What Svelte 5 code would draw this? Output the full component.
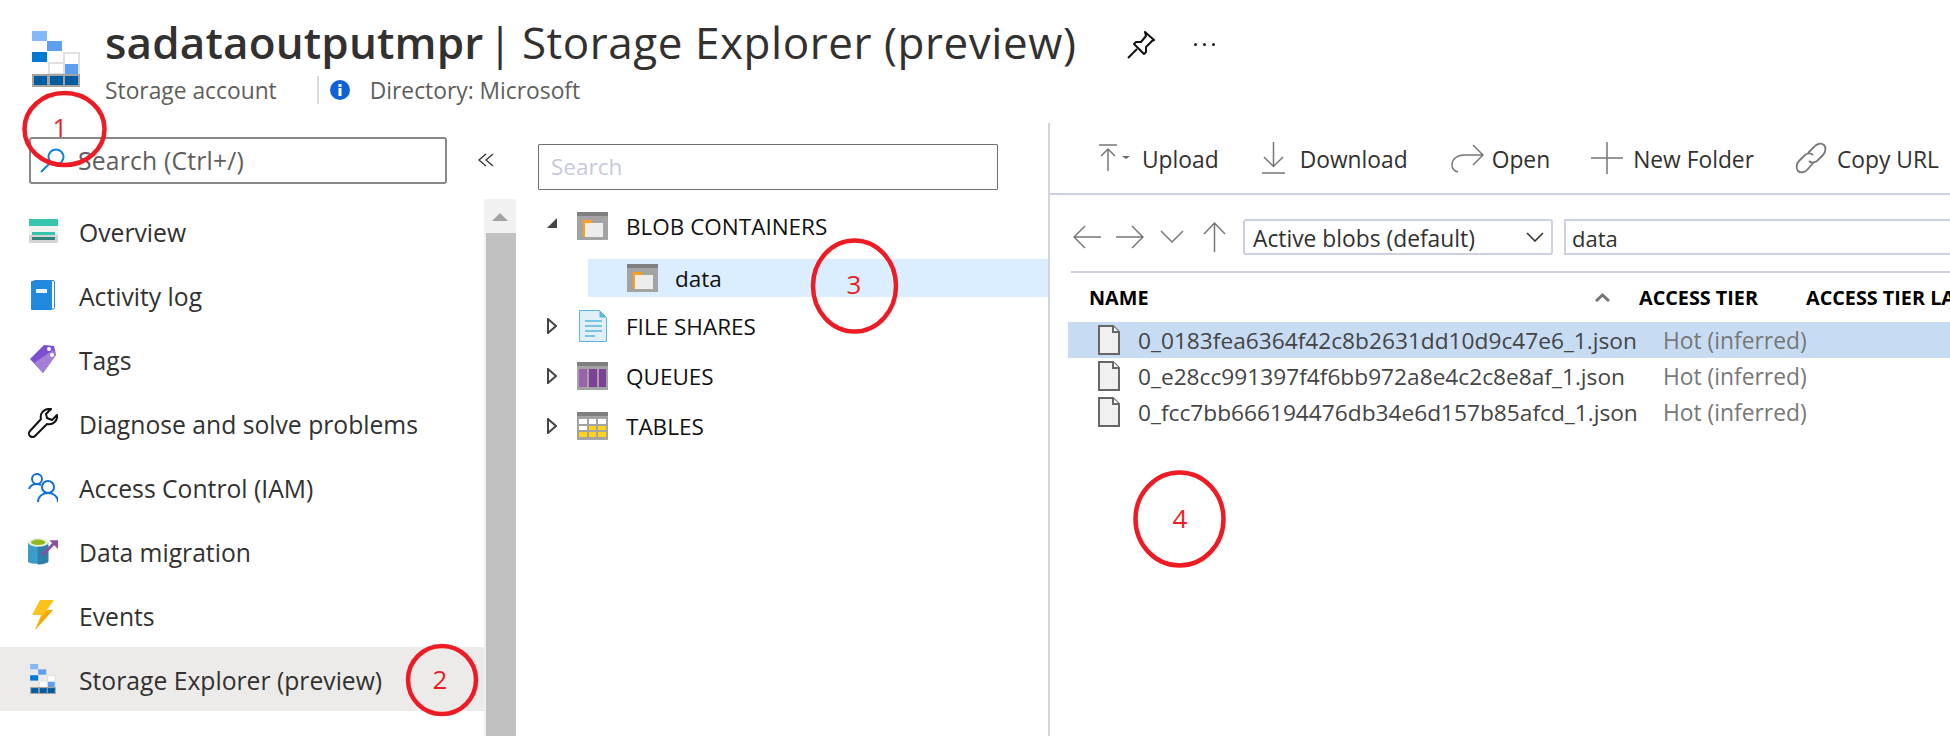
<script>
  const nav = ['Overview','Activity log','Tags','Diagnose and solve problems','Access Control (IAM)','Data migration','Events','Storage Explorer (preview)'];
  const files = ['0_0183fea6364f42c8b2631dd10d9c47e6_1.json','0_e28cc991397f4f6bb972a8e4c2c8e8af_1.json','0_fcc7bb666194476db34e6d157b85afcd_1.json'];
</script>

{#snippet storage(w, h)}
  <svg width={w} height={h} viewBox="0 0 48 56">
    <rect x="0" y="0" width="15" height="10" fill="#83b9f9"/>
    <rect x="15" y="10" width="15" height="10" fill="#5ea0ef"/>
    <rect x="0" y="21" width="15" height="10" fill="#0078d4"/>
    <rect x="32" y="22" width="15" height="21" fill="#fff" stroke="#e1e1e1" stroke-width="2"/>
    <rect x="17" y="32" width="15" height="11" fill="#fff" stroke="#e1e1e1" stroke-width="2"/>
    <rect x="33" y="33" width="13" height="10" fill="#5ea0ef"/>
    <rect x="0" y="43" width="48" height="13" fill="#a3a3a3"/>
    <rect x="2" y="45" width="13" height="9" fill="#005ba1"/>
    <rect x="18" y="45" width="13" height="9" fill="#005ba1"/>
    <rect x="33" y="45" width="13" height="9" fill="#005ba1"/>
  </svg>
{/snippet}

{#snippet navIcon(i)}
  {#if i === 0}
    <svg width="29" height="24" viewBox="0 0 29 24">
      <rect width="29" height="24" rx="1" fill="#d4d4d4"/><rect y="7" width="29" height="9" fill="#f2f2f2"/>
      <rect width="29" height="7" fill="#38c5b0"/><rect x="3" y="13" width="23" height="3" fill="#38c5b0"/><rect x="3" y="18" width="23" height="3" fill="#2f8379"/>
    </svg>
  {:else if i === 1}
    <svg width="24" height="30" viewBox="0 0 24 30">
      <rect x="2" y="0.5" width="21.5" height="28.5" rx="1.5" fill="#fff" stroke="#2a86d8"/>
      <rect y="1" width="21" height="29" rx="1" fill="#2089e0"/><rect x="5" y="9" width="11" height="4" fill="#eaf3fb"/>
    </svg>
  {:else if i === 2}
    <svg width="27" height="29" viewBox="0 0 27 29">
      <path d="M0 14 14 0l10 1 2 9-13 18z" fill="#7a4fd1"/><path d="M4 18 23 5l3 5-13 18z" fill="#a47fd6"/>
      <circle cx="19" cy="4" r="2" fill="#fff"/><circle cx="22" cy="10" r="2" fill="#fff"/>
    </svg>
  {:else if i === 3}
    <svg width="30" height="30" viewBox="0 0 30 30" fill="none" stroke="#111" stroke-width="2">
      <path d="M21 1a8 8 0 0 0-8 10L2 23a3.5 3.5 0 0 0 5 5L19 16a8 8 0 0 0 10-9l-5 5-5-2-1-4 5-5z" stroke-linejoin="round"/>
    </svg>
  {:else if i === 4}
    <svg width="30" height="30" viewBox="0 0 30 30" fill="none" stroke="#0f6fd8" stroke-width="2">
      <circle cx="9" cy="7" r="5"/><path d="M1 17c1-3 4-5 8-5 2 0 3 .5 4 1"/><circle cx="20" cy="15" r="6"/><path d="M10 30c0-5 4-9 10-9s10 4 10 9"/>
    </svg>
  {:else if i === 5}
    <svg width="31" height="29" viewBox="0 0 31 29">
      <path d="M0 5h21v20c-2 3-19 3-21 0z" fill="#3a9cc9"/><path d="M10 8h11v17c-3 2-8 3-11 3z" fill="#2f7fa8"/>
      <ellipse cx="10.500" cy="5" rx="10.500" ry="4.500" fill="#e8f0d8"/><ellipse cx="10.500" cy="5" rx="7.500" ry="2.800" fill="#8fba1e"/>
      <path d="M15 18 27 6" stroke="#8a4f9e" stroke-width="3"/><path d="M22 3h9v9z" fill="#8a4f9e"/>
    </svg>
  {:else if i === 6}
    <svg width="22" height="30" viewBox="0 0 22 30">
      <path d="M8 0h14l-7 10h6L3 30l6-15H0z" fill="#fcc21b"/><path d="M15 10h6L3 30l6-12z" fill="#f5a800"/>
    </svg>
  {:else}
    {@render storage(26, 30)}
  {/if}
{/snippet}

{#snippet treeIcon(kind)}
  <span class="ticon">
  {#if kind === 'file'}
    <svg width="28" height="32" viewBox="0 0 28 32">
      <path d="M.5.5h20l7 7v24H.5z" fill="#dff0f8" stroke="#58b5de"/><path d="M20.500.5v7h7z" fill="#58b5de"/>
      <path d="M6 11h17M6 16h17M6 21h17M6 26h10" stroke="#58b5de" stroke-width="1.500"/>
    </svg>
  {:else}
    <svg width="31" height="28" viewBox="0 0 31 28">
      <rect width="31" height="28" fill="#a3a3a3"/><rect width="31" height="4" fill="#7f7f7f"/>
      {#if kind === 'blob'}
        <path d="M6 8h8l2 3h10v14H6z" fill="#ff9f1c"/><rect x="8" y="11" width="18" height="14" fill="#ededed"/>
      {:else if kind === 'queue'}
        <rect x="2" y="7" width="8" height="18" fill="#9b63ad"/><rect x="12" y="7" width="8" height="18" fill="#7e3f96"/><rect x="22" y="7" width="7" height="18" fill="#7e3f96"/>
      {:else}
        <rect x="2" y="7" width="8" height="5" fill="#fff"/><rect x="12" y="7" width="7" height="5" fill="#fff"/><rect x="21" y="7" width="8" height="5" fill="#fff"/>
        <rect x="2" y="14" width="8" height="4" fill="#fff"/><rect x="12" y="14" width="7" height="4" fill="#ffd21e"/><rect x="21" y="14" width="8" height="4" fill="#ffd21e"/>
        <rect x="2" y="20" width="8" height="5" fill="#ffd21e"/><rect x="12" y="20" width="7" height="5" fill="#ffd21e"/><rect x="21" y="20" width="8" height="5" fill="#ffd21e"/>
      {/if}
    </svg>
  {/if}
  </span>
{/snippet}

{#snippet caret()}
  <svg class="caret" width="10" height="16" viewBox="0 0 10 16"><path d="M1 1l8 7-8 7z" fill="#fff" stroke="#444" stroke-width="2"/></svg>
{/snippet}

<div class="app">
  <header class="top">
    <div class="logo">{@render storage(48, 56)}</div>
    <div class="heading">
      <div class="title-row">
        <h1><b>sadataoutputmpr</b> <span class="bar">|</span> <span class="light">Storage Explorer (preview)</span></h1>
        <svg class="pin" width="28" height="28" viewBox="0 0 28 28" fill="none" stroke="#111" stroke-width="2" stroke-linejoin="round">
          <path d="M18 1l9 8-2 1-6 6 0 5-2 2-10-10 2-2h5l5-6z"/><path d="M10 18 1 27"/>
        </svg>
        <span class="dots"><i></i><i></i><i></i></span>
      </div>
      <div class="sub">
        <span>Storage account</span>
        <span class="sub-sep"></span>
        <svg width="20" height="20" viewBox="0 0 20 20"><circle cx="10" cy="10" r="10" fill="#0f62d6"/><rect x="8.500" y="8" width="3" height="8" fill="#fff"/><rect x="8.500" y="4" width="3" height="3" fill="#fff"/></svg>
        <span class="sub-dir">Directory: Microsoft</span>
      </div>
    </div>
  </header>

  <main class="body">
    <aside class="side">
      <div class="side-search-row">
        <div class="side-search">
          <svg width="25" height="25" viewBox="0 0 25 25" fill="none" stroke="#1083d8" stroke-width="2"><circle cx="16" cy="9" r="7.500"/><path d="M10.500 14.500 1 24"/></svg>
          <span>Search (Ctrl+/)</span>
        </div>
        <svg class="collapse" width="16" height="14" viewBox="0 0 16 14" fill="none" stroke="#333" stroke-width="1.300"><path d="M8 1 1 7l7 6M15 1 8 7l7 6"/></svg>
      </div>
      <div class="side-lower">
        <nav class="nav">
          {#each nav as item, i}
            <div class="nav-item" class:active={i === 7}>
              <span class="nav-icon">{@render navIcon(i)}</span>
              <span class="nav-label">{item}</span>
            </div>
          {/each}
        </nav>
        <div class="scroll">
          <div class="scroll-up"><svg width="16" height="8" viewBox="0 0 16 8"><path d="M8 0l8 8H0z" fill="#a3a3a3"/></svg></div>
          <div class="scroll-thumb"></div>
        </div>
      </div>
    </aside>

    <section class="tree">
      <div class="tree-search">Search</div>
      <div class="tree-row">
        <svg class="caret" width="10" height="10" viewBox="0 0 10 10"><path d="M10 0v10H0z" fill="#444"/></svg>
        {@render treeIcon('blob')}<span>BLOB CONTAINERS</span>
      </div>
      <div class="tree-row child">{@render treeIcon('blob')}<span>data</span></div>
      <div class="tree-row">{@render caret()}{@render treeIcon('file')}<span>FILE SHARES</span></div>
      <div class="tree-row">{@render caret()}{@render treeIcon('queue')}<span>QUEUES</span></div>
      <div class="tree-row">{@render caret()}{@render treeIcon('table')}<span>TABLES</span></div>
    </section>

    <section class="pane">
      <div class="toolbar">
        <div class="tool t-up">
          <svg width="34" height="28" viewBox="0 0 34 28" fill="none" stroke="#777" stroke-width="1.500"><path d="M1 1h18M10 27V5M3 12l7-7 7 7"/><path d="M24 12h8l-4 3z" fill="#666" stroke="none"/></svg>
          <span>Upload</span>
        </div>
        <div class="tool t-down">
          <svg width="23" height="32" viewBox="0 0 23 32" fill="none" stroke="#777" stroke-width="1.500"><path d="M11.500 0v24M2 15l9.500 9.500L21 15M0 31h23"/></svg>
          <span>Download</span>
        </div>
        <div class="tool t-open">
          <svg width="33" height="30" viewBox="0 0 33 30" fill="none" stroke="#777" stroke-width="1.500"><path d="M32 12H13C6 12 1 16 1 22c0 3 2 6 6 7M22 2l10 10-10 10"/></svg>
          <span>Open</span>
        </div>
        <div class="tool">
          <svg width="32" height="32" viewBox="0 0 32 32" fill="none" stroke="#777" stroke-width="1.500"><path d="M16 0v32M0 16h32"/></svg>
          <span>New Folder</span>
        </div>
        <div class="tool">
          <svg width="32" height="32" viewBox="0 0 32 32" fill="none" stroke="#777" stroke-width="1.800"><path d="M13 11 19 5c3-4 8-4 10-2s2 7-1 10l-6 6c-3 2-6 2-8 0"/><path d="M19 20l-6 7c-3 4-8 4-10 2s-2-7 1-10l6-6c3-2 6-2 8 0"/></svg>
          <span>Copy URL</span>
        </div>
      </div>

      <div class="crumbs">
        <svg width="28" height="24" viewBox="0 0 28 24" fill="none" stroke="#777" stroke-width="1.500"><path d="M28 12H1M12 1 1 12l11 11"/></svg>
        <svg class="fwd" width="28" height="24" viewBox="0 0 28 24" fill="none" stroke="#777" stroke-width="1.500"><path d="M0 12h27M16 1l11 11-11 11"/></svg>
        <svg class="dn" width="24" height="14" viewBox="0 0 24 14" fill="none" stroke="#777" stroke-width="1.500"><path d="M1 1l11 11L23 1"/></svg>
        <svg class="upa" width="23" height="30" viewBox="0 0 23 30" fill="none" stroke="#777" stroke-width="1.500"><path d="M11.500 30V1M1 12 11.500 1 22 12"/></svg>
        <div class="select">
          <span class="stext">Active blobs (default)</span>
          <svg width="18" height="10" viewBox="0 0 18 10" fill="none" stroke="#333" stroke-width="1.600"><path d="M1 1l8 8 8-8"/></svg>
        </div>
        <div class="path"><span class="ptext">data</span></div>
      </div>

      <div class="table">
        <div class="thead">
          <span class="th-name">NAME</span>
          <svg class="sort" width="15" height="9" viewBox="0 0 15 9" fill="none" stroke="#777" stroke-width="3"><path d="M1 8l6.500-6L14 8"/></svg>
          <span class="th-tier">ACCESS TIER</span>
          <span>ACCESS TIER LA</span>
        </div>
        {#each files as f, i}
          <div class="row" class:selected={i === 0}>
            <svg width="22" height="30" viewBox="0 0 22 30"><path d="M1 1h14l6 6v22H1z" fill="#f0f0f0" stroke="#666" stroke-width="2"/><path d="M15 1v6h6" fill="#fff" stroke="#666" stroke-width="2"/></svg>
            <span class="fname">{f}</span>
            <span class="tier">Hot (inferred)</span>
          </div>
        {/each}
      </div>
    </section>
  </main>

  <svg class="marks" width="1950" height="736" viewBox="0 0 1950 736" fill="none" stroke="#ed1c24" stroke-width="4.500">
    <ellipse cx="64.500" cy="129" rx="40" ry="36"/>
    <ellipse cx="442" cy="680" rx="34" ry="34"/>
    <ellipse cx="854.500" cy="286" rx="41.500" ry="45.500"/>
    <ellipse cx="1179.500" cy="519" rx="44" ry="46.500"/>
    <g fill="#ed1c24" stroke="none" font-size="26" font-family="'Open Sans', sans-serif" text-anchor="middle">
      <text x="60" y="137">1</text><text x="440" y="689">2</text><text x="854" y="294">3</text><text x="1180" y="528">4</text>
    </g>
  </svg>
</div>

<style>
  :global(body) { margin: 0; background: #fff; }
  .app { position: relative; width: 1950px; height: 736px; overflow: hidden; display: flex; flex-direction: column; font-family: "Open Sans", "Noto Sans", sans-serif; color: #323130; background: #fff; }
  .top { height: 123px; flex: none; display: flex; box-sizing: border-box; padding: 31px 0 0 32px; gap: 25px; }
  .logo { height: 56px; }
  .heading { margin-top: -19px; }
  .title-row { display: flex; align-items: center; height: 61px; }
  h1 { margin: 0; font-size: 44px; font-weight: 400; line-height: 61px; white-space: nowrap; letter-spacing: .15px; }
  h1 b { font-weight: 600; }
  .bar { margin: 0 -2px 0 -7px; }
  .light { letter-spacing: .55px; }
  .pin { margin: 4px 0 0 51px; }
  .dots { display: flex; gap: 6px; margin: 4px 0 0 39px; }
  .dots i { width: 3px; height: 3px; background: #222; border-radius: 50%; }
  .sub { display: flex; align-items: center; height: 30px; font-size: 22.8px; color: #605e5c; margin-top: 2px; }
  .sub-sep { width: 2px; height: 28px; background: #d8d8d8; margin: 0 11px 0 40px; }
  .sub-dir { margin-left: 20px; }
  .body { flex: 1; display: flex; min-height: 0; }
  .side { width: 516px; flex: none; display: flex; flex-direction: column; }
  .side-search-row { height: 76px; flex: none; display: flex; align-items: flex-start; padding: 14px 0 0 29px; box-sizing: border-box; }
  .side-search { width: 418px; height: 47px; box-sizing: border-box; border: 2px solid #8a8886; border-radius: 3px; display: flex; align-items: center; gap: 13px; padding-left: 9px; font-size: 24.7px; letter-spacing: .2px; color: #605e5c; }
  .collapse { margin: 16px 0 0 31px; }
  .side-lower { flex: 1; display: flex; min-height: 0; }
  .nav { width: 484px; flex: none; }
  .nav-item { height: 64px; display: flex; align-items: center; font-size: 24.7px; padding-left: 28px; }
  .nav-item.active { background: #edebe9; }
  .nav-icon { width: 30px; margin-right: 21px; flex: none; display: flex; align-items: center; justify-content: center; }
  .nav-label { margin-top: 2px; }
  .scroll { width: 32px; flex: none; background: #f1f1f1; display: flex; flex-direction: column; }
  .scroll-up { height: 34px; display: flex; justify-content: center; padding-top: 14px; box-sizing: border-box; }
  .scroll-thumb { flex: 1; margin-left: 2px; background: #c1c1c1; }
  .tree { width: 532px; flex: none; box-sizing: border-box; padding: 21px 0 0 0; font-size: 22.5px; color: #111; }
  .tree-search { width: 460px; height: 46px; margin: 0 0 11px 22px; box-sizing: border-box; border: 1px solid #6f6f6f; border-radius: 1px; padding-left: 12px; line-height: 44px; color: #c7c9db; font-size: 22.5px; }
  .tree-row { height: 50px; display: flex; align-items: center; padding-left: 61px; gap: 18px; position: relative; }
  .ticon { width: 31px; flex: none; display: flex; justify-content: center; }
  .tree-row .caret { position: absolute; left: 31px; top: 17px; }
  .tree-row.child { height: 38px; margin: 8px 0 0 72px; padding-left: 39px; gap: 17px; background: #dbeeff; }
  .tree-row.child + .tree-row { margin-top: 4px; }
  .pane { flex: 1; min-width: 0; border-left: 2px solid #d2d4de; }
  .toolbar { height: 72px; box-sizing: border-box; border-bottom: 2px solid #cdd0e0; display: flex; align-items: center; padding-left: 48px; font-size: 22.8px; }
  .tool { display: flex; align-items: center; gap: 10px; margin-right: 41px; white-space: nowrap; }
  .tool span { margin-top: 3px; }
  .t-up { margin-right: 43px; }
  .t-down { margin-right: 43px; gap: 15px; }
  .t-open { gap: 8px; }
  .crumbs { height: 78px; box-sizing: border-box; margin-left: 21px; border-bottom: 2px solid #cdd0e0; display: flex; align-items: center; padding: 8px 0 0 2px; }
  .fwd { margin-left: 15px; }
  .dn { margin-left: 16px; }
  .upa { margin-left: 19px; }
  .select { width: 310px; height: 36px; margin-left: 17px; flex: none; box-sizing: border-box; border: 2px solid #cdd0e0; border-radius: 3px; display: flex; align-items: center; justify-content: space-between; padding: 0 7px 0 8px; font-size: 22.8px; }
  .stext { margin-top: 3px; }
  .ptext { margin-top: 1px; }
  .path { flex: 1; height: 36px; margin-left: 11px; box-sizing: border-box; border: 2px solid #cdd0e0; border-right: 0; padding-left: 6px; display: flex; align-items: center; font-size: 22px; }
  .table { margin-left: 18px; white-space: nowrap; overflow: hidden; }
  .thead { height: 49px; display: flex; align-items: center; font-size: 19.8px; font-weight: 700; color: #000; padding-left: 21px; box-sizing: border-box; }
  .th-name { width: 506px; flex: none; }
  .sort { flex: none; margin-right: 29px; }
  .th-tier { width: 167px; flex: none; }
  .row { height: 36px; display: flex; align-items: center; padding-left: 30px; font-size: 22.7px; color: #444; }
  .row.selected { background: #c7dcf3; }
  .fname { margin-left: 18px; width: 525px; flex: none; }
  .tier { color: #777; font-size: 22.8px; }
  .marks { position: absolute; inset: 0; pointer-events: none; }
</style>
